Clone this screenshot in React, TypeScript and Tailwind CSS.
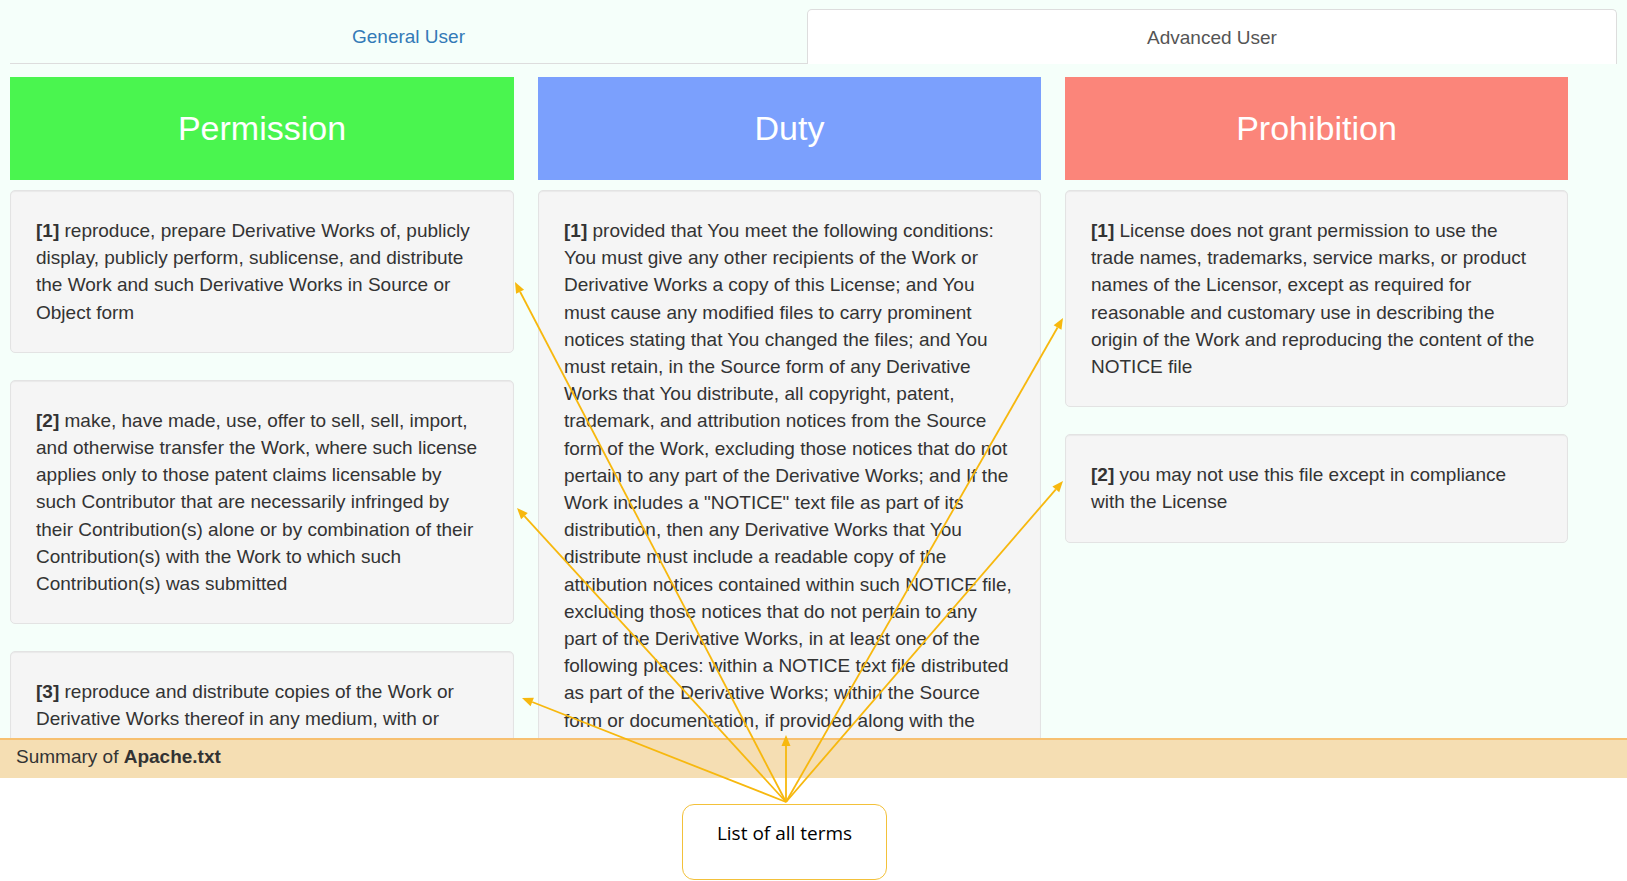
import React from "react";

type Card = { n: number; lines: string[] };

const permission: Card[] = [
  {
    n: 1,
    lines: [
      "reproduce, prepare Derivative Works of, publicly",
      "display, publicly perform, sublicense, and distribute",
      "the Work and such Derivative Works in Source or",
      "Object form",
    ],
  },
  {
    n: 2,
    lines: [
      "make, have made, use, offer to sell, sell, import,",
      "and otherwise transfer the Work, where such license",
      "applies only to those patent claims licensable by",
      "such Contributor that are necessarily infringed by",
      "their Contribution(s) alone or by combination of their",
      "Contribution(s) with the Work to which such",
      "Contribution(s) was submitted",
    ],
  },
  {
    n: 3,
    lines: [
      "reproduce and distribute copies of the Work or",
      "Derivative Works thereof in any medium, with or",
      "without modifications, and in Source or Object form",
    ],
  },
];

const duty: Card[] = [
  {
    n: 1,
    lines: [
      "provided that You meet the following conditions:",
      "You must give any other recipients of the Work or",
      "Derivative Works a copy of this License; and You",
      "must cause any modified files to carry prominent",
      "notices stating that You changed the files; and You",
      "must retain, in the Source form of any Derivative",
      "Works that You distribute, all copyright, patent,",
      "trademark, and attribution notices from the Source",
      "form of the Work, excluding those notices that do not",
      "pertain to any part of the Derivative Works; and If the",
      'Work includes a "NOTICE" text file as part of its',
      "distribution, then any Derivative Works that You",
      "distribute must include a readable copy of the",
      "attribution notices contained within such NOTICE file,",
      "excluding those notices that do not pertain to any",
      "part of the Derivative Works, in at least one of the",
      "following places: within a NOTICE text file distributed",
      "as part of the Derivative Works; within the Source",
      "form or documentation, if provided along with the",
      "Derivative Works; or, within a display generated by the",
      "Derivative Works, if and wherever such third-party",
    ],
  },
];

const prohibition: Card[] = [
  {
    n: 1,
    lines: [
      "License does not grant permission to use the",
      "trade names, trademarks, service marks, or product",
      "names of the Licensor, except as required for",
      "reasonable and customary use in describing the",
      "origin of the Work and reproducing the content of the",
      "NOTICE file",
    ],
  },
  {
    n: 2,
    lines: [
      "you may not use this file except in compliance",
      "with the License",
    ],
  },
];

function Well({ card }: { card: Card }) {
  return (
    <div className="mb-[27px] rounded-[5px] border border-[#e3e3e3] bg-[#f5f5f5] px-[25px] py-[26px] text-[19px] leading-[27.2px] text-[#333] shadow-[inset_0_1px_1px_rgba(0,0,0,0.05)]">
      {card.lines.map((l, i) => (
        <div key={i} className="whitespace-nowrap">
          {i === 0 ? (
            <>
              <b className="font-bold">[{card.n}]</b> {l}
            </>
          ) : (
            l
          )}
        </div>
      ))}
    </div>
  );
}

function Column({
  title,
  bg,
  cards,
}: {
  title: string;
  bg: string;
  cards: Card[];
}) {
  return (
    <div className="flex flex-col">
      <div
        className={`flex h-[103px] items-center justify-center text-[34px] text-white ${bg}`}
      >
        {title}
      </div>
      <div className="mt-[10px]">
        {cards.map((c) => (
          <Well key={c.n} card={c} />
        ))}
      </div>
    </div>
  );
}

const origin = { x: 786, y: 802 };
const targets = [
  { x: 515, y: 282 },
  { x: 517, y: 508 },
  { x: 522, y: 698 },
  { x: 786, y: 735 },
  { x: 1063, y: 318 },
  { x: 1063, y: 481 },
];

export default function App() {
  return (
    <div className="relative h-[881px] w-full overflow-hidden bg-white font-['Liberation_Sans',Arial,sans-serif]">
      <div className="h-[738px] overflow-hidden bg-[#f5fffa]">
        <div className="flex px-[10px] pt-[9px]">
          <div className="flex h-[55px] w-[797px] items-center justify-center border-b border-[#ddd] pt-[2px] text-[19px] text-[#337ab7]">
            General User
          </div>
          <div className="flex h-[55px] w-[810px] items-center justify-center rounded-t-[5px] border border-b-0 border-[#ddd] bg-white pt-[2px] text-[19px] text-[#555]">
            Advanced User
          </div>
        </div>
        <div className="mt-[13px] grid grid-cols-[504px_503px_503px] gap-x-[24px] pl-[10px]">
          <Column title="Permission" bg="bg-[#4af54f]" cards={permission} />
          <Column title="Duty" bg="bg-[#7ba0fd]" cards={duty} />
          <Column title="Prohibition" bg="bg-[#fb857a]" cards={prohibition} />
        </div>
      </div>
      <div className="h-[40px] border-t-2 border-[#f7c070] bg-[#f5deb3] pl-[16px] pt-[3px] text-[19px] leading-[27px] text-[#333]">
        Summary of <b className="font-bold">Apache.txt</b>
      </div>
      <div className="pl-[682px] pt-[26px]">
        <div className="flex h-[76px] w-[205px] justify-center rounded-[12px] border border-[#f3c13a] bg-white pt-[15px] font-['Open_Sans',sans-serif] text-[19px] leading-[26px] text-black">
          List of all terms
        </div>
      </div>
      <svg
        className="pointer-events-none absolute left-0 top-0"
        width="1627"
        height="881"
        viewBox="0 0 1627 881"
      >
        {targets.map((t, i) => {
          const dx = t.x - origin.x;
          const dy = t.y - origin.y;
          const len = Math.hypot(dx, dy);
          const ux = dx / len;
          const uy = dy / len;
          const hl = 11;
          const hw = 4.5;
          const bx = t.x - ux * hl;
          const by = t.y - uy * hl;
          const px = -uy;
          const py = ux;
          return (
            <g key={i}>
              <line
                x1={origin.x}
                y1={origin.y}
                x2={bx}
                y2={by}
                stroke="#f7b80e"
                strokeWidth={1.8}
              />
              <polygon
                points={`${t.x},${t.y} ${bx + px * hw},${by + py * hw} ${bx - px * hw},${by - py * hw}`}
                fill="#f7b80e"
              />
            </g>
          );
        })}
      </svg>
    </div>
  );
}
